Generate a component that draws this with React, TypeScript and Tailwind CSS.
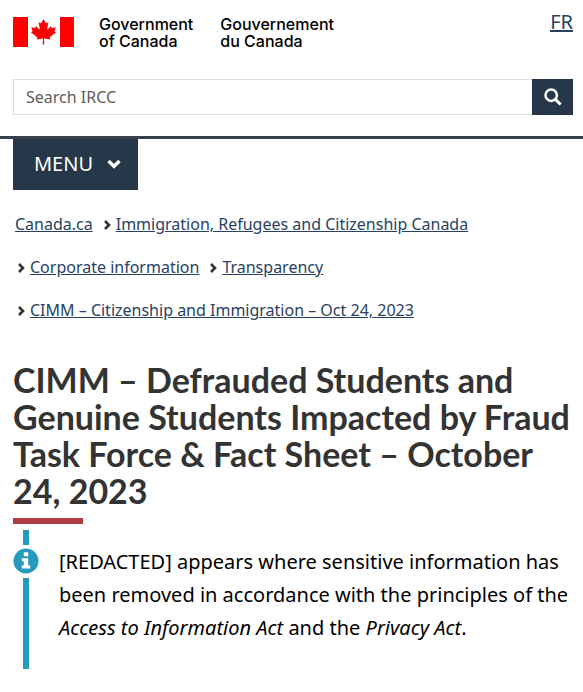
import React from "react";

const breadcrumbs = [
  "Canada.ca",
  "Immigration, Refugees and Citizenship Canada",
  "Corporate information",
  "Transparency",
  "CIMM – Citizenship and Immigration – Oct 24, 2023",
];

export default function App() {
  return (
    <div className="bg-white pb-6 font-['Noto_Sans',sans-serif] text-black">
      <header>
        <div className="flex items-start justify-between pr-[10px] pl-[13px] pt-[10px]">
          <Brand />
          <a
            href="#fr"
            lang="fr"
            className="text-xl leading-6 text-[#284162] underline"
          >
            <abbr title="Français" className="underline decoration-dotted">
              FR
            </abbr>
          </a>
        </div>
        <Search />
        <nav className="border-t-[3px] border-[#38414d] pl-[13px]">
          <button
            type="button"
            className="flex h-[51px] w-[125px] items-center justify-center gap-[14px] bg-[#26374a] pb-[2px] pl-1 text-xl text-white"
          >
            MENU
            <svg viewBox="0 0 14 10" className="h-[10px] w-[14px]">
              <path
                d="M1.5 2 7 7.3 12.5 2"
                fill="none"
                stroke="currentColor"
                strokeWidth="3.4"
              />
            </svg>
          </button>
        </nav>
      </header>
      <Breadcrumb />
      <main className="px-[13px]">
        <h1 className="mt-[29px] font-['Lato',sans-serif] text-[34px] leading-[37px] font-bold text-[#333]">
          CIMM – Defrauded Students and Genuine Students Impacted by Fraud Task
          Force &amp; Fact Sheet – October 24, 2023
        </h1>
        <div className="mt-[9px] h-[6px] w-[70px] bg-[#af3c43]" />
        <InfoAlert />
      </main>
    </div>
  );
}

function Brand() {
  return (
    <div className="flex items-start pt-[6px]">
      <svg
        viewBox="0 0 61 31"
        preserveAspectRatio="none"
        className="mt-px h-[30px] w-[61px]"
      >
        <path fill="#f00" d="M0 0h15v31H0zM47 0h14v31H47z" />
        <path
          fill="#f00"
          d="M30.500 2l-2.200 4.100c-.3.500-.7.400-1.100.2l-1.600-.8 1.200 6.300c.3 1.100-.6 1.100-1 .6l-2.800-3.100-.5 1.600c0 .2-.3.400-.6.400l-3.500-.7.900 3.300c.2.800.4 1.100-.2 1.300l-1.200.6 6 4.900c.3.200.4.500.3.900l-.5 1.700 5.900-1c.2 0 .4.100.4.400l-.3 5.700h1.600l-.3-5.700c0-.3.200-.4.400-.4l5.900 1-.5-1.700c-.1-.4 0-.7.300-.9l6-4.900-1.200-.6c-.6-.2-.4-.5-.2-1.300l.9-3.300-3.500.7c-.3 0-.6-.2-.6-.4l-.5-1.600-2.800 3.100c-.4.500-1.300.5-1-.6l1.200-6.300-1.600.8c-.4.200-.8.300-1.100-.2z"
        />
      </svg>
      <div className="ml-[25px] flex gap-[27px] font-['Inter',sans-serif] text-base leading-[17px] font-medium">
        <p>
          Government
          <br />
          of Canada
        </p>
        <p lang="fr">
          Gouvernement
          <br />
          du Canada
        </p>
      </div>
    </div>
  );
}

function Search() {
  return (
    <form
      className="mt-[29px] mb-[21px] flex pr-[10px] pl-[13px]"
      onSubmit={(e) => e.preventDefault()}
    >
      <input
        type="search"
        aria-label="Search IRCC"
        placeholder="Search IRCC"
        className="h-9 min-w-0 flex-1 border border-r-0 border-[#ddd] px-3 text-base placeholder:text-[#5c5c5c]"
      />
      <button
        type="submit"
        aria-label="Search"
        className="flex h-9 w-[41px] items-center justify-center bg-[#26374a] text-white"
      >
        <svg viewBox="0 0 18 18" className="size-[18px]">
          <circle
            cx="7.200"
            cy="7.200"
            r="5.700"
            fill="none"
            stroke="currentColor"
            strokeWidth="2.500"
          />
          <path
            d="m11.300 11.300 5.400 5.200"
            stroke="currentColor"
            strokeWidth="3"
          />
        </svg>
      </button>
    </form>
  );
}

function Breadcrumb() {
  return (
    <nav aria-label="Breadcrumb" className="mt-[13px] px-[13px]">
      <ol className="flex flex-wrap gap-x-1 text-base leading-[43px]">
        {breadcrumbs.map((name, index) => (
          <li key={name} className="flex items-center px-[2px]">
            {index > 0 && (
              <svg
                viewBox="0 0 7 10"
                className="mr-[5px] ml-[3px] h-[10px] w-[7px] text-[#333]"
              >
                <path
                  d="M1 1l4 4-4 4"
                  fill="none"
                  stroke="currentColor"
                  strokeWidth="2.600"
                />
              </svg>
            )}
            <a href="#top" className="text-[#284162] underline">
              {name}
            </a>
          </li>
        ))}
      </ol>
    </nav>
  );
}

function InfoAlert() {
  return (
    <section className="mt-[6px] flex gap-5">
      <div className="flex w-[26px] shrink-0 flex-col items-center">
        <div className="h-[15px] w-[6px] bg-[#269abc]" />
        <svg viewBox="0 0 26 26" className="my-[3px] size-[26px] shrink-0">
          <circle cx="13" cy="13" r="12.500" fill="#269abc" />
          <path
            fill="#fff"
            d="M10.800 4.300h4.400v4h-4.400zM8.800 10.300h6.400v7.200h2v3H8.800v-3h2v-4.300h-2z"
          />
        </svg>
        <div className="mt-px w-[6px] flex-1 bg-[#269abc]" />
      </div>
      <p className="pt-[15px] pb-[25px] text-xl leading-[33px]">
        [REDACTED] appears where sensitive information has been removed in
        accordance with the principles of the{" "}
        <em>Access to Information Act</em> and the <em>Privacy Act</em>.
      </p>
    </section>
  );
}
